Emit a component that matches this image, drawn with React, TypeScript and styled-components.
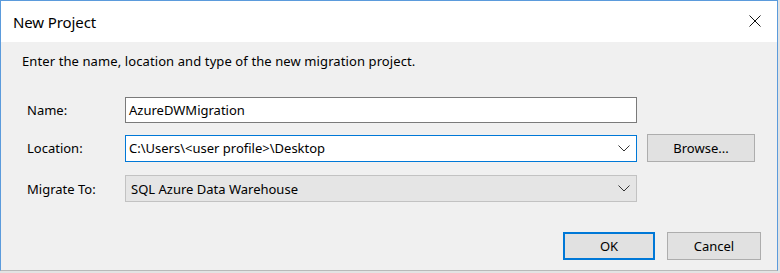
import React, { ReactElement } from 'react';
import styled, { createGlobalStyle } from 'styled-components';

const GlobalStyle = createGlobalStyle`
  html,
  body {
    margin: 0;
    padding: 0;
    background: #e3e3e3;
  }

  body {
    font-family: 'Noto Sans', 'Open Sans', sans-serif;
    color: #000;
  }
`;

const Window = styled.div`
  box-sizing: border-box;
  display: flex;
  flex-direction: column;
  width: 778px;
  height: 271px;
  border: 1px solid #5b9bdc;
  border-bottom-color: #b9b9b9;
  background: #f0f0f0;
`;

const TitleBar = styled.div`
  align-items: center;
  background: #fff;
  display: flex;
  height: 41px;
  justify-content: space-between;
  padding: 0 12px 0 12px;
`;

const Title = styled.span`
  font-size: 15px;
  letter-spacing: -0.1px;
`;

const CloseButton = styled.div`
  display: flex;
  align-items: center;
  justify-content: center;
  width: 20px;
  height: 20px;
  margin-top: -2px;
`;

const Body = styled.div`
  display: flex;
  flex: 1;
  flex-direction: column;
  font-size: 13px;
  padding: 11px 0 0 21px;
`;

const Intro = styled.p`
  margin: 0 0 27px;
  line-height: 17px;
  letter-spacing: 0.1px;
`;

const Row = styled.div<{ $gap: number }>`
  align-items: center;
  display: flex;
  margin-top: ${(p) => p.$gap}px;
  padding-left: 5px;
`;

const Label = styled.label`
  width: 98px;
`;

const Field = styled.div<{ $variant: 'input' | 'focused' | 'disabled' }>`
  align-items: center;
  box-sizing: border-box;
  display: flex;
  height: ${(p) => (p.$variant === 'input' ? 26 : 27)}px;
  justify-content: space-between;
  padding: 0 6px 0 ${(p) => (p.$variant === 'disabled' ? 5 : 3)}px;
  width: 512px;
  background: ${(p) => (p.$variant === 'disabled' ? '#e5e5e5' : '#fff')};
  border: 1px solid
    ${(p) => ({ input: '#7a7a7a', focused: '#0078d7', disabled: '#c2c2c2' })[p.$variant]};
  font-size: 13px;
`;

const Button = styled.button<{ $width: number; $primary?: boolean }>`
  box-sizing: border-box;
  height: 28px;
  width: ${(p) => p.$width}px;
  background: #e1e1e1;
  border: ${(p) => (p.$primary ? '2px solid #0078d7' : '1px solid #adadad')};
  font-family: inherit;
  font-size: 13px;
  color: #000;
  padding: 0;
`;

const Footer = styled.div`
  display: flex;
  gap: 12px;
  justify-content: flex-end;
  margin-top: 30px;
  padding-right: 16px;
`;

const Chevron = (): ReactElement => (
  <svg width="12" height="7" viewBox="0 0 12 7">
    <path d="M0.5 0.5 L6 6 L11.5 0.5" fill="none" stroke="#333" strokeWidth="1" />
  </svg>
);

export default function App(): ReactElement {
  return (
    <>
      <GlobalStyle />
      <Window>
        <TitleBar>
          <Title>New Project</Title>
          <CloseButton>
            <svg width="12" height="12" viewBox="0 0 12 12">
              <path d="M0.5 0.5 L11.5 11.5 M11.5 0.5 L0.5 11.5" stroke="#111" strokeWidth="1" />
            </svg>
          </CloseButton>
        </TitleBar>
        <Body>
          <Intro>Enter the name, location and type of the new migration project.</Intro>
          <Row $gap={0}>
            <Label>Name:</Label>
            <Field $variant="input">AzureDWMigration</Field>
          </Row>
          <Row $gap={11}>
            <Label>Location:</Label>
            <Field $variant="focused">
              {'C:\\Users\\<user profile>\\Desktop'}
              <Chevron />
            </Field>
            <Button $width={108} style={{ marginLeft: 10 }}>
              Browse...
            </Button>
          </Row>
          <Row $gap={13}>
            <Label>Migrate To:</Label>
            <Field $variant="disabled">
              SQL Azure Data Warehouse
              <Chevron />
            </Field>
          </Row>
          <Footer>
            <Button $width={92} $primary>
              OK
            </Button>
            <Button $width={94}>Cancel</Button>
          </Footer>
        </Body>
      </Window>
    </>
  );
}
